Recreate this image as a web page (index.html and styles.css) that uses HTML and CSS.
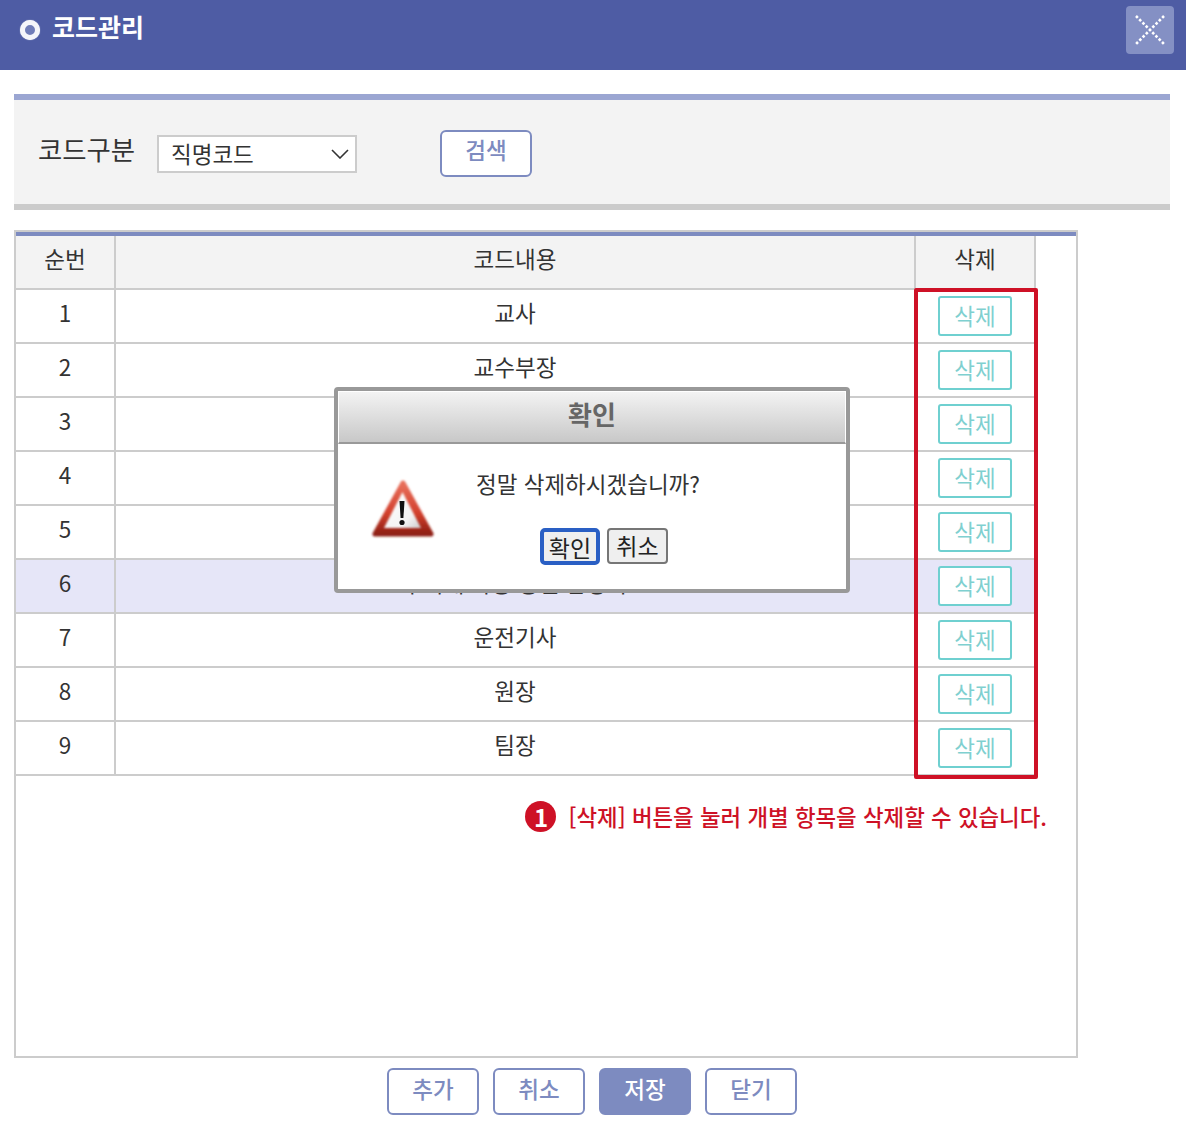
FILE: index.html
```html
<!DOCTYPE html>
<html lang="ko">

<head>
    <meta charset="UTF-8">
    <title>코드관리</title>
    <link rel="stylesheet" href="styles.css">
</head>

<body>
    <div class="top-bar">
        <div class="top-title">
            <span class="title-dot"></span>
            <h1>코드관리</h1>
        </div>
        <button class="close-btn" aria-label="닫기">
            <svg width="32" height="32" viewBox="0 0 32 32">
                <path d="M2 2L30 30M30 2L2 30" stroke="#fff" stroke-width="2.6" stroke-dasharray="2.6 2" fill="none" />
            </svg>
        </button>
    </div>

    <div class="search-box">
        <label class="search-label" for="codeType">코드구분</label>
        <div class="select-wrap">
            <select class="search-select" id="codeType">
                <option>직명코드</option>
            </select>
            <svg class="select-arrow" width="18" height="10" viewBox="0 0 18 10">
                <path d="M1 1L9 9L17 1" stroke="#333" stroke-width="1.6" fill="none" />
            </svg>
        </div>
        <button class="btn search-btn">검색</button>
    </div>

    <div class="grid-frame">
        <table class="code-table">
            <colgroup>
                <col class="col-no">
                <col class="col-name">
                <col class="col-del">
            </colgroup>
            <thead>
                <tr>
                    <th>순번</th>
                    <th>코드내용</th>
                    <th>삭제</th>
                </tr>
            </thead>
            <tbody>
                <tr><td>1</td><td>교사</td><td class="del-cell"><button class="del-btn">삭제</button></td></tr>
                <tr><td>2</td><td>교수부장</td><td class="del-cell"><button class="del-btn">삭제</button></td></tr>
                <tr><td>3</td><td></td><td class="del-cell"><button class="del-btn">삭제</button></td></tr>
                <tr><td>4</td><td></td><td class="del-cell"><button class="del-btn">삭제</button></td></tr>
                <tr><td>5</td><td></td><td class="del-cell"><button class="del-btn">삭제</button></td></tr>
                <tr class="row-on"><td>6</td><td>우리재 사용 승인 담당자</td><td class="del-cell"><button class="del-btn">삭제</button></td></tr>
                <tr><td>7</td><td>운전기사</td><td class="del-cell"><button class="del-btn">삭제</button></td></tr>
                <tr><td>8</td><td>원장</td><td class="del-cell"><button class="del-btn">삭제</button></td></tr>
                <tr><td>9</td><td>팀장</td><td class="del-cell"><button class="del-btn">삭제</button></td></tr>
            </tbody>
        </table>

        <p class="note"><span class="note-num">1</span>[삭제] 버튼을 눌러 개별 항목을 삭제할 수 있습니다.</p>

        <!-- 삭제 열 강조 -->
        <div class="mark-box"></div>

        <!-- 확인 창 -->
        <div class="confirm">
            <div class="confirm-title">확인</div>
            <div class="confirm-body">
                <svg class="confirm-icon" width="66" height="68" viewBox="0 0 66 68">
                    <defs>
                        <linearGradient id="warnEdge" x1="0" y1="0" x2="0" y2="1">
                            <stop offset="0" stop-color="#e8705c" />
                            <stop offset="0.6" stop-color="#d23f2c" />
                            <stop offset="1" stop-color="#8e1f14" />
                        </linearGradient>
                        <linearGradient id="warnFill" x1="0" y1="0" x2="1" y2="1">
                            <stop offset="0" stop-color="#ffffff" />
                            <stop offset="0.7" stop-color="#f4f4f4" />
                            <stop offset="1" stop-color="#cccccc" />
                        </linearGradient>
                        <filter id="warnSoft" x="-10%" y="-10%" width="120%" height="120%">
                            <feGaussianBlur stdDeviation="0.8" />
                        </filter>
                    </defs>
                    <path d="M33 9L61 60H5Z" fill="url(#warnEdge)" stroke="url(#warnEdge)" stroke-width="5" stroke-linejoin="round" filter="url(#warnSoft)" />
                    <path d="M32.5 18L51 54H14Z" fill="url(#warnFill)" filter="url(#warnSoft)" />
                    <path d="M29.5 27H34.5L33.4 44H30.6Z" fill="#111" />
                    <circle cx="32" cy="48.5" r="2.6" fill="#111" />
                </svg>
                <div class="confirm-main">
                    <p class="confirm-msg">정말 삭제하시겠습니까?</p>
                    <div class="confirm-btns">
                        <button class="sys-btn sys-btn-focus">확인</button>
                        <button class="sys-btn">취소</button>
                    </div>
                </div>
            </div>
        </div>
    </div>

    <div class="foot-btns">
        <button class="btn">추가</button>
        <button class="btn">취소</button>
        <button class="btn btn-on">저장</button>
        <button class="btn">닫기</button>
    </div>
</body>

</html>
```

FILE: styles.css
```css
* {
    box-sizing: border-box;
}

body {
    margin: 0;
    background-color: #fff;
    color: #333;
    font-family: "Noto Sans CJK KR", "Noto Sans", sans-serif;
    font-size: 22.5px;
}

button,
select {
    font-family: inherit;
}

/* 상단 제목 */
.top-bar {
    display: flex;
    justify-content: space-between;
    align-items: flex-start;
    height: 70px;
    padding: 6px 12px 0 20px;
    background-color: #4e5ca4;
}

.top-title {
    display: flex;
    align-items: center;
    gap: 12px;
    height: 44px;
}

.top-title h1 {
    margin: 0 0 4px;
    color: #fff;
    font-size: 25px;
    font-weight: 700;
    line-height: 40px;
}

.title-dot {
    width: 20px;
    height: 20px;
    margin-top: 4px;
    border: 5px solid #f4f5fa;
    border-radius: 50%;
    background-color: #6f7cb8;
    box-shadow: 0 0 1px #f4f5fa;
}

.close-btn {
    display: flex;
    align-items: center;
    justify-content: center;
    width: 48px;
    height: 48px;
    padding: 0;
    border: 0;
    border-radius: 4px;
    background-color: #8490c4;
}

/* 검색 영역 */
.search-box {
    display: flex;
    align-items: center;
    height: 116px;
    margin: 24px 16px 0 14px;
    padding-left: 24px;
    border-top: 6px solid #9ba6d2;
    border-bottom: 6px solid #cbcbcb;
    background-color: #f3f3f3;
}

.search-label {
    width: 119px;
    font-size: 26.4px;
    margin-top: -8px;
}

.select-wrap {
    position: relative;
    width: 200px;
    height: 38px;
    margin: 4px 83px 0 0;
}

.search-select {
    width: 100%;
    height: 100%;
    padding: 0 0 4px 12px;
    border: 2px solid #ccc;
    border-radius: 0;
    background-color: #fff;
    color: #333;
    font-size: 22.5px;
    appearance: none;
}

.select-arrow {
    position: absolute;
    right: 8px;
    top: 14px;
}

.btn {
    width: 92px;
    height: 47px;
    padding: 0 0 8px;
    border: 2px solid #7d8bc0;
    border-radius: 6px;
    background-color: #fff;
    color: #7d8bc0;
    font-size: 22.5px;
    font-weight: 500;
}

.search-btn {
    margin-top: 2px;
}

.btn-on {
    background-color: #7d8bc0;
    color: #fff;
}

/* 목록 */
.grid-frame {
    position: relative;
    width: 1064px;
    height: 828px;
    margin: 20px 0 0 14px;
    padding-top: 4px;
    border: 2px solid #ccc;
    box-shadow: inset 0 4px 0 #7d8bc0;
}

.code-table {
    width: 1020px;
    border-collapse: separate;
    border-spacing: 0;
    table-layout: fixed;
    text-align: center;
}

.col-no {
    width: 100px;
}

.col-del {
    width: 120px;
}

.code-table th {
    height: 54px;
    padding-bottom: 10px;
    border-right: 2px solid #ccc;
    border-bottom: 2px solid #ccc;
    background-color: #f3f3f3;
    font-weight: 400;
}

.code-table td {
    height: 54px;
    padding: 0 0 8px;
    border-right: 2px solid #ccc;
    border-bottom: 2px solid #ccc;
}

.code-table .del-cell {
    padding: 6px 0 0;
    vertical-align: top;
}

.row-on td {
    background-color: #e6e6f8;
}

.del-btn {
    display: block;
    width: 74px;
    height: 40px;
    margin: 0 auto;
    padding: 0 0 2px;
    border: 2px solid #6fd0d0;
    border-radius: 3px;
    background-color: #fff;
    color: #7fd0d0;
    font-size: 22.5px;
    font-weight: 400;
}

.note {
    display: flex;
    align-items: center;
    justify-content: flex-end;
    gap: 12px;
    margin: 25px 29px 0 0;
    color: #ce1126;
    font-size: 22.4px;
    font-weight: 500;
    line-height: 31px;
}

.note-num {
    width: 31px;
    height: 31px;
    border-radius: 50%;
    background-color: #ce1126;
    color: #fff;
    font-size: 24px;
    font-weight: 700;
    text-align: center;
}

.mark-box {
    position: absolute;
    left: 898px;
    top: 56px;
    width: 124px;
    height: 491px;
    border: 4px solid #ce1126;
    border-radius: 2px;
}

/* 확인 창 */
.confirm {
    position: absolute;
    left: 318px;
    top: 155px;
    width: 516px;
    height: 206px;
    border: 4px solid #999;
    border-radius: 4px;
    background-color: #fff;
}

.confirm-title {
    height: 53px;
    padding-bottom: 6px;
    border: 1px solid #fff;
    border-bottom: 2px solid #999;
    background: linear-gradient(#f3f3f3, #c8c8c8);
    color: #666;
    font-size: 26px;
    font-weight: 700;
    line-height: 44px;
    text-align: center;
}

.confirm-body {
    display: flex;
    padding-left: 32px;
}

.confirm-icon {
    flex: none;
    margin-top: 30px;
}

.confirm-main {
    flex: 1;
}

.confirm-msg {
    margin: 22px 0 28px 40px;
    font-size: 22.5px;
    line-height: 34px;
}

.confirm-btns {
    display: flex;
    gap: 7px;
    margin-left: 104px;
}

.sys-btn {
    width: 61px;
    height: 36px;
    padding: 0 0 6px;
    border: 2px solid #767676;
    border-radius: 4px;
    background-color: #efefef;
    color: #222;
    font-size: 23px;
    line-height: 30px;
}

.sys-btn-focus {
    width: 60px;
    height: 37px;
    border: 4px solid #2a5fc4;
    border-radius: 5px;
}

/* 하단 버튼 */
.foot-btns {
    display: flex;
    justify-content: center;
    gap: 14px;
    margin-top: 10px;
    padding-right: 2px;
}
```
